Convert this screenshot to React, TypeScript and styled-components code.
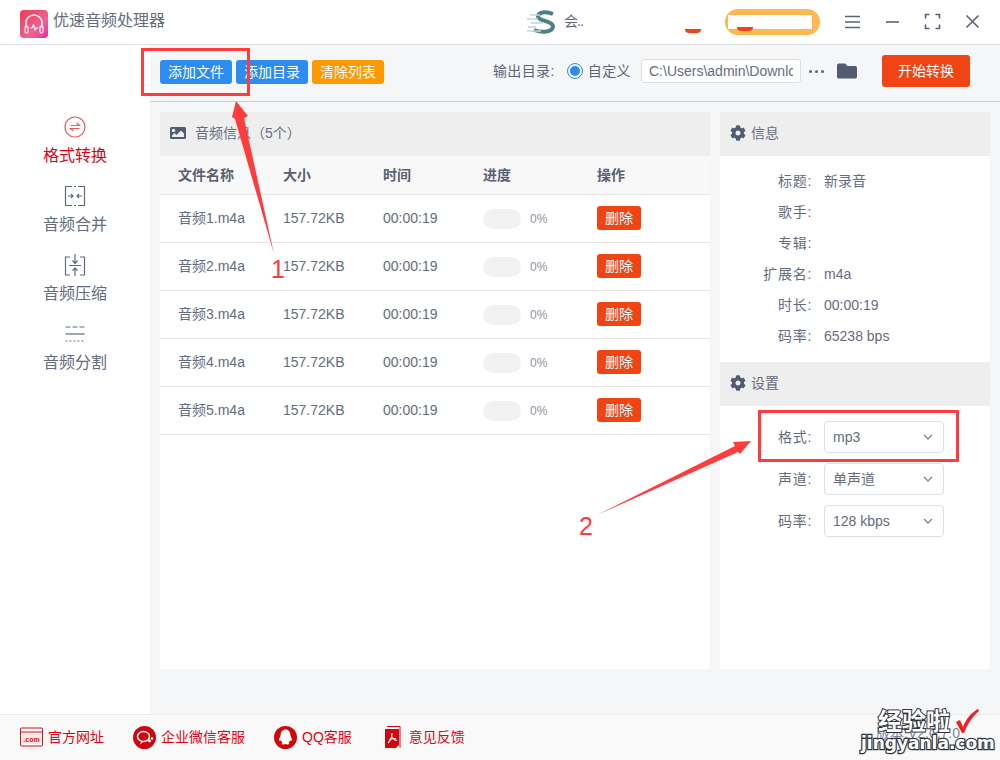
import React from "react";
import styled, { createGlobalStyle } from "styled-components";
import { FaCog, FaImage, FaFolder } from "react-icons/fa";

const Global = createGlobalStyle`
  html, body { margin: 0; padding: 0; background: #fff; }
  body { font-family: "Liberation Sans", "Noto Sans CJK SC", sans-serif; color: #5f6578; line-height: 20px; }
  * { box-sizing: border-box; }
`;

const Page = styled.div`
  position: relative;
  width: 1000px;
  height: 760px;
  overflow: hidden;
  display: flex;
  flex-direction: column;
`;

const TitleBar = styled.header`
  height: 45px;
  flex: none;
  display: flex;
  align-items: center;
  padding: 0 19px 2px 20px;
  background: #fff;
  border-bottom: 1px solid #dedfe2;
`;
const Logo = styled.svg`
  width: 28px;
  height: 28px;
  flex: none;
  margin-top: 5px;
`;
const AppName = styled.div`
  margin-left: 5px;
  font-size: 16px;
  color: #666c7e;
`;
const Spacer = styled.div`
  flex: 1;
`;
const BrandMark = styled.svg`
  width: 30px;
  height: 24px;
  flex: none;
  margin-top: 2px;
`;
const UserName = styled.div`
  width: 121px;
  margin-left: 8px;
  font-size: 14px;
  color: #5f6578;
  letter-spacing: -1px;
`;
const RedBit = styled.span`
  display: block;
  width: 16px;
  height: 4px;
  margin-top: 19px;
  margin-right: 24px;
  background: #f04415;
  border-radius: 0 0 6px 6px;
`;
const VipPill = styled.div`
  position: relative;
  width: 95px;
  height: 26px;
  margin-top: 1px;
  margin-right: 24px;
  background: #ffb84f;
  border-radius: 13px;
  display: flex;
  align-items: center;
  justify-content: flex-end;
  padding-right: 8px;
  &::after {
    content: "";
    position: absolute;
    left: 12px;
    bottom: 4px;
    width: 16px;
    height: 4px;
    background: #f04415;
    border-radius: 0 0 6px 6px;
  }
`;
const VipInner = styled.div`
  width: 84px;
  height: 14px;
  background: #fff;
`;
const WinButtons = styled.div`
  display: flex;
  align-items: center;
  gap: 23px;
`;
const WinIcon = styled.svg`
  width: 17px;
  height: 17px;
  display: block;
  fill: none;
  stroke: #5c6378;
  stroke-width: 1.6;
`;

const Middle = styled.div`
  flex: 1;
  min-height: 0;
  display: flex;
`;
const Sidebar = styled.nav`
  width: 150px;
  flex: none;
  background: #fff;
  padding-top: 70px;
  display: flex;
  flex-direction: column;
  gap: 18px;
`;
const NavItem = styled.div<{ $active?: boolean }>`
  height: 51px;
  display: flex;
  flex-direction: column;
  align-items: center;
  gap: 6px;
  font-size: 16px;
  line-height: 21px;
  color: ${(p) => (p.$active ? "#e60012" : "#666c7e")};
`;
const NavIcon = styled.svg<{ $active?: boolean }>`
  width: 24px;
  height: 24px;
  display: block;
  fill: none;
  stroke: ${(p) => (p.$active ? "#ea5a5f" : "#5f6a85")};
  stroke-width: 1.2;
`;

const Main = styled.main`
  flex: 1;
  min-width: 0;
  display: flex;
  flex-direction: column;
  background: #f5f6f8;
`;
const Toolbar = styled.div`
  height: 57px;
  flex: none;
  display: flex;
  align-items: center;
  padding: 0 30px 4px 10px;
  border-bottom: 1px solid #cfd0d3;
`;
const ToolButton = styled.div<{ $color: string }>`
  width: 72px;
  height: 24px;
  margin: 2px 4px 0 0;
  border-radius: 3px;
  background: ${(p) => p.$color};
  color: #fff;
  font-size: 14px;
  line-height: 24px;
  text-align: center;
`;
const OutLabel = styled.div`
  font-size: 14px;
  color: #5f6578;
  white-space: nowrap;
  letter-spacing: 0.4px;
`;
const Radio = styled.span`
  width: 16px;
  height: 16px;
  margin: 0 5px 0 12px;
  border: 1px solid #2d8cf0;
  border-radius: 50%;
  display: flex;
  align-items: center;
  justify-content: center;
  flex: none;
  &::after {
    content: "";
    width: 10px;
    height: 10px;
    border-radius: 50%;
    background: #2d8cf0;
  }
`;
const PathInput = styled.input`
  width: 160px;
  height: 24px;
  margin-left: 10px;
  padding: 0 7px;
  border: 1px solid #dcdee2;
  border-radius: 3px;
  background: #fff;
  font-family: inherit;
  font-size: 14px;
  color: #666c7e;
  outline: none;
`;
const Dots = styled.div`
  width: 36px;
  padding-left: 8px;
  display: flex;
  gap: 3px;
  & > i {
    width: 3px;
    height: 3px;
    border-radius: 50%;
    background: #5c6378;
  }
`;
const FolderButton = styled.div`
  width: 20px;
  height: 20px;
  color: #535b72;
  font-size: 20px;
  line-height: 0;
`;
const StartButton = styled.div`
  width: 88px;
  height: 32px;
  margin-left: 25px;
  border-radius: 3px;
  background: #f04415;
  color: #fff;
  font-size: 14px;
  line-height: 32px;
  text-align: center;
`;

const Content = styled.div`
  flex: 1;
  min-height: 0;
  display: flex;
  gap: 10px;
  padding: 10px 10px 45px;
`;
const ListPanel = styled.section`
  width: 550px;
  background: #fff;
`;
const SidePanel = styled.section`
  width: 270px;
  background: #fff;
`;
const PanelHead = styled.div<{ $gap: number }>`
  height: 44px;
  display: flex;
  align-items: center;
  gap: ${(p) => p.$gap}px;
  padding: 0 0 2px 10px;
  background: #eeeeee;
  font-size: 14px;
  color: #666c7e;
  & > svg {
    color: #535b72;
    font-size: 16px;
  }
`;
const Row = styled.div<{ $head?: boolean }>`
  height: ${(p) => (p.$head ? 39 : 48)}px;
  display: grid;
  grid-template-columns: 105px 100px 100px 114px 1fr;
  align-items: center;
  padding: 0 0 1px 18px;
  border-bottom: 1px solid #e6e6e6;
  background: ${(p) => (p.$head ? "#f8f8f8" : "#fff")};
  font-size: 14px;
  font-weight: ${(p) => (p.$head ? 700 : 400)};
  color: ${(p) => (p.$head ? "#5a6072" : "#666c7e")};
`;
const Progress = styled.div`
  display: flex;
  align-items: center;
  gap: 9px;
  margin-top: 2px;
  font-size: 12px;
  color: #8d92a1;
`;
const Track = styled.div`
  width: 38px;
  height: 20px;
  border-radius: 10px;
  background: #f2f2f2;
`;
const DeleteButton = styled.div`
  width: 44px;
  height: 24px;
  border-radius: 3px;
  background: #f04415;
  color: #fff;
  font-size: 14px;
  line-height: 24px;
  text-align: center;
`;

const InfoList = styled.div`
  padding: 9px 0 11px;
`;
const InfoRow = styled.div`
  height: 31px;
  display: grid;
  grid-template-columns: 92px 1fr;
  column-gap: 12px;
  align-items: center;
  font-size: 14px;
  color: #666c7e;
`;
const FieldLabel = styled.div`
  text-align: right;
  font-size: 14px;
  color: #666c7e;
  letter-spacing: 0.7px;
`;
const Settings = styled.div`
  padding: 15px 0;
  display: flex;
  flex-direction: column;
  gap: 10px;
`;
const SettingRow = styled.div`
  display: grid;
  grid-template-columns: 92px 120px;
  column-gap: 12px;
  align-items: center;
`;
const SelectBox = styled.div`
  height: 32px;
  padding: 0 9px 0 8px;
  border: 1px solid #dcdee2;
  border-radius: 4px;
  background: #fff;
  display: flex;
  align-items: center;
  justify-content: space-between;
  font-size: 14px;
  color: #666c7e;
`;
const Chevron = styled.svg`
  width: 12px;
  height: 12px;
  fill: none;
  stroke: #808695;
  stroke-width: 1.3;
`;

const Footer = styled.footer`
  height: 46px;
  flex: none;
  display: flex;
  align-items: center;
  gap: 29px;
  padding: 0 0 1px 20px;
  background: #f9f9f9;
  border-top: 1px solid #ececec;
`;
const FooterLink = styled.div`
  display: flex;
  align-items: center;
  gap: 5px;
  font-size: 14px;
  color: #e60012;
`;
const FooterIcon = styled.svg`
  width: 23px;
  height: 23px;
  flex: none;
  display: block;
`;

const Markup = styled.svg`
  position: absolute;
  inset: 0;
  width: 1000px;
  height: 760px;
  pointer-events: none;
`;
const StepNumber = styled.span<{ $x: number; $y: number }>`
  position: absolute;
  left: ${(p) => p.$x}px;
  top: ${(p) => p.$y}px;
  font-size: 25px;
  line-height: 28px;
  color: #ff3b3b;
`;
const VersionText = styled.span`
  position: absolute;
  left: 876px;
  top: 723px;
  font-size: 14px;
  color: #7c88a8;
`;
const WatermarkCn = styled.span`
  position: absolute;
  left: 878px;
  top: 707px;
  font-size: 24px;
  line-height: 30px;
  font-weight: 700;
  color: #fff;
  -webkit-text-stroke: 2px #33333a;
  paint-order: stroke fill;
`;
const WatermarkEn = styled.span`
  position: absolute;
  left: 861px;
  top: 732px;
  font-family: "DejaVu Sans", sans-serif;
  font-size: 17px;
  line-height: 22px;
  font-weight: 700;
  color: #fff;
  -webkit-text-stroke: 2.5px #33333a;
  paint-order: stroke fill;
`;
const WatermarkCheck = styled.svg`
  position: absolute;
  left: 955px;
  top: 708px;
  width: 24px;
  height: 26px;
`;

const files = [1, 2, 3, 4, 5];
const info: [string, string][] = [
  ["标题:", "新录音"],
  ["歌手:", ""],
  ["专辑:", ""],
  ["扩展名:", "m4a"],
  ["时长:", "00:00:19"],
  ["码率:", "65238 bps"],
];
const settings: [string, string][] = [
  ["格式:", "mp3"],
  ["声道:", "单声道"],
  ["码率:", "128 kbps"],
];

export default function App() {
  return (
    <Page>
      <Global />
      <TitleBar>
        <Logo viewBox="0 0 28 28">
          <defs>
            <linearGradient id="lg" x1="0" y1="0" x2="1" y2="1">
              <stop offset="0" stopColor="#ee3a5c" />
              <stop offset="0.65" stopColor="#f06291" />
              <stop offset="1" stopColor="#e9259f" />
            </linearGradient>
          </defs>
          <rect width="28" height="28" rx="4" fill="url(#lg)" />
          <path d="M6 18v-5a8 8 0 0 1 16 0v5" fill="none" stroke="#fff" strokeWidth="1.4" />
          <rect x="5" y="16" width="3" height="7" rx="1.2" fill="none" stroke="#fff" strokeWidth="1.1" />
          <rect x="20" y="16" width="3" height="7" rx="1.2" fill="none" stroke="#fff" strokeWidth="1.1" />
          <path d="M10 18h2l1.500-3 1.500 5 1-2h2" fill="none" stroke="#fff" strokeWidth="1.1" />
        </Logo>
        <AppName>优速音频处理器</AppName>
        <Spacer />
        <BrandMark viewBox="0 0 30 24">
          <path d="M27 4C20 1 12 2 12 6.500S27 11 27 16.500 16 23 8 20" fill="none" stroke="#4d7f86" strokeWidth="4" />
          <path d="M4 5h10M1 9h11M5 13h12M2 17h8M1 21h14" stroke="#c3d4d6" strokeWidth="1.6" />
        </BrandMark>
        <UserName>会..</UserName>
        <RedBit />
        <VipPill>
          <VipInner />
        </VipPill>
        <WinButtons>
          <WinIcon viewBox="0 0 17 17">
            <path d="M1 3.500h15M1 9h15M1 14.500h15" />
          </WinIcon>
          <WinIcon viewBox="0 0 17 17">
            <path d="M2 9h13" />
          </WinIcon>
          <WinIcon viewBox="0 0 17 17">
            <path d="M1.500 5.500v-4h4M11.500 1.500h4v4M15.500 11.500v4h-4M5.500 15.500h-4v-4" />
          </WinIcon>
          <WinIcon viewBox="0 0 17 17">
            <path d="M2.500 2.500l12 12M14.500 2.500l-12 12" />
          </WinIcon>
        </WinButtons>
      </TitleBar>

      <Middle>
        <Sidebar>
          <NavItem $active>
            <NavIcon $active viewBox="0 0 24 24">
              <circle cx="12" cy="12" r="10" />
              <path d="M7.500 10.500h9L13.500 8M16.500 13.500h-9l3 2.500" />
            </NavIcon>
            格式转换
          </NavItem>
          <NavItem>
            <NavIcon viewBox="0 0 24 24">
              <path d="M9 2.500H2.500v19H9M15 2.500h6.500v19H15M11 2.500h2M11 21.500h2" />
              <path d="M5 12h5M8 10l2 2-2 2M19 12h-5M16 10l-2 2 2 2" />
            </NavIcon>
            音频合并
          </NavItem>
          <NavItem>
            <NavIcon viewBox="0 0 24 24">
              <path d="M7 4H2.500v18H7M17 4h4.500v18H17M6 12.500h12" />
              <path d="M12 1v9M9.500 7.500L12 10.500l2.500-3M12 23v-8M9.500 17.500L12 15l2.500 2.500" />
            </NavIcon>
            音频压缩
          </NavItem>
          <NavItem>
            <NavIcon viewBox="0 0 24 24">
              <path d="M2.500 5h5M9.500 5h5M16.500 5h5" />
              <path d="M2.500 12h19" />
              <path d="M2.500 19h19" strokeDasharray="2 2" />
            </NavIcon>
            音频分割
          </NavItem>
        </Sidebar>

        <Main>
          <Toolbar>
            <ToolButton $color="#2d8cf0">添加文件</ToolButton>
            <ToolButton $color="#2d8cf0">添加目录</ToolButton>
            <ToolButton $color="#ff9900">清除列表</ToolButton>
            <Spacer />
            <OutLabel>输出目录:</OutLabel>
            <Radio />
            <OutLabel>自定义</OutLabel>
            <PathInput readOnly value="C:\Users\admin\Downloads" />
            <Dots>
              <i />
              <i />
              <i />
            </Dots>
            <FolderButton>
              <FaFolder />
            </FolderButton>
            <StartButton>开始转换</StartButton>
          </Toolbar>
          <Content>
            <ListPanel>
              <PanelHead $gap={9}>
                <FaImage />
                音频信息（5个）
              </PanelHead>
              <Row $head>
                <span>文件名称</span>
                <span>大小</span>
                <span>时间</span>
                <span>进度</span>
                <span>操作</span>
              </Row>
              {files.map((n) => (
                <Row key={n}>
                  <span>音频{n}.m4a</span>
                  <span>157.72KB</span>
                  <span>00:00:19</span>
                  <Progress>
                    <Track />
                    0%
                  </Progress>
                  <DeleteButton>删除</DeleteButton>
                </Row>
              ))}
            </ListPanel>
            <SidePanel>
              <PanelHead $gap={5}>
                <FaCog />
                信息
              </PanelHead>
              <InfoList>
                {info.map(([k, v]) => (
                  <InfoRow key={k}>
                    <FieldLabel>{k}</FieldLabel>
                    <span>{v}</span>
                  </InfoRow>
                ))}
              </InfoList>
              <PanelHead $gap={5}>
                <FaCog />
                设置
              </PanelHead>
              <Settings>
                {settings.map(([k, v]) => (
                  <SettingRow key={k}>
                    <FieldLabel>{k}</FieldLabel>
                    <SelectBox>
                      {v}
                      <Chevron viewBox="0 0 12 12">
                        <path d="M2 4l4 4 4-4" />
                      </Chevron>
                    </SelectBox>
                  </SettingRow>
                ))}
              </Settings>
            </SidePanel>
          </Content>
        </Main>
      </Middle>

      <Footer>
        <FooterLink>
          <FooterIcon viewBox="0 0 23 23">
            <rect x="0.500" y="2" width="22" height="18" rx="1" fill="none" stroke="#d0111b" />
            <path d="M0.500 6h22" stroke="#d0111b" />
            <rect x="2" y="8" width="19" height="10" fill="#fbe5e6" />
            <text x="11.500" y="16" fontSize="7" fontWeight="700" textAnchor="middle" fill="#d0111b" fontFamily="Liberation Sans">.com</text>
          </FooterIcon>
          官方网址
        </FooterLink>
        <FooterLink>
          <FooterIcon viewBox="0 0 23 23">
            <circle cx="11.500" cy="11.500" r="11.500" fill="#d0060f" />
            <ellipse cx="10.500" cy="10.500" rx="6" ry="5" fill="none" stroke="#fff" strokeWidth="1.5" />
            <circle cx="16.500" cy="15" r="1.400" fill="#fff" />
            <circle cx="19" cy="12.500" r="1.200" fill="#fff" />
            <path d="M8 16l-1 2 3-1.500" fill="#fff" />
          </FooterIcon>
          企业微信客服
        </FooterLink>
        <FooterLink>
          <FooterIcon viewBox="0 0 23 23">
            <circle cx="11.500" cy="11.500" r="11.500" fill="#d0060f" />
            <path d="M11.500 3.500c-3 0-4.800 2.400-4.800 5.200 0 1.200-1.700 3.600-1.700 5.300 0 1 .8 1 1.700.2.300 1 .9 1.700 1.700 2.300-1 .5-1.100 2 1 2 1.100 0 1.700-.4 2.100-.8.400.4 1 .8 2.100.8 2.100 0 2-1.500 1-2 .8-.6 1.400-1.300 1.700-2.300.9.800 1.700.8 1.700-.2 0-1.700-1.700-4.100-1.700-5.300 0-2.800-1.800-5.200-4.800-5.200z" fill="#fff" />
          </FooterIcon>
          QQ客服
        </FooterLink>
        <FooterLink>
          <FooterIcon viewBox="0 0 23 23">
            <path d="M6 .500h13v21" fill="none" stroke="#d0060f" />
            <path d="M4 3h14v16l-3 3H4z" fill="#d0060f" />
            <path d="M11 7c0 4-2 8-4 10M11 11c1 2 3 3 5 3.500M8 14c2-1 4-1.500 7-1.500" fill="none" stroke="#fff" strokeWidth="1.200" />
          </FooterIcon>
          意见反馈
        </FooterLink>
      </Footer>

      <Markup viewBox="0 0 1000 760">
        <rect x="142.500" y="49.500" width="106" height="45" fill="none" stroke="#ff3b3b" strokeWidth="3" />
        <rect x="759.500" y="411.500" width="198" height="49" fill="none" stroke="#ff3b3b" strokeWidth="3" />
        <path d="M236 101L248 116L244 118L274 254L235 119L232 117Z" fill="#ff3b3b" />
        <path d="M751 441L740 454L738 452L597 515L735 446L733 442Z" fill="#ff3b3b" />
      </Markup>
      <StepNumber $x={271} $y={255}>1</StepNumber>
      <StepNumber $x={579} $y={512}>2</StepNumber>

      <VersionText>版本:V2.0.7.0</VersionText>
      <WatermarkCn>经验啦</WatermarkCn>
      <WatermarkEn>jingyanla.com</WatermarkEn>
      <WatermarkCheck viewBox="0 0 24 26">
        <path d="M1 14l4-2 3 7C11 11 16 5 23 1l1 2C17 9 12 17 9 25H7z" fill="#f21d1d" />
      </WatermarkCheck>
    </Page>
  );
}
